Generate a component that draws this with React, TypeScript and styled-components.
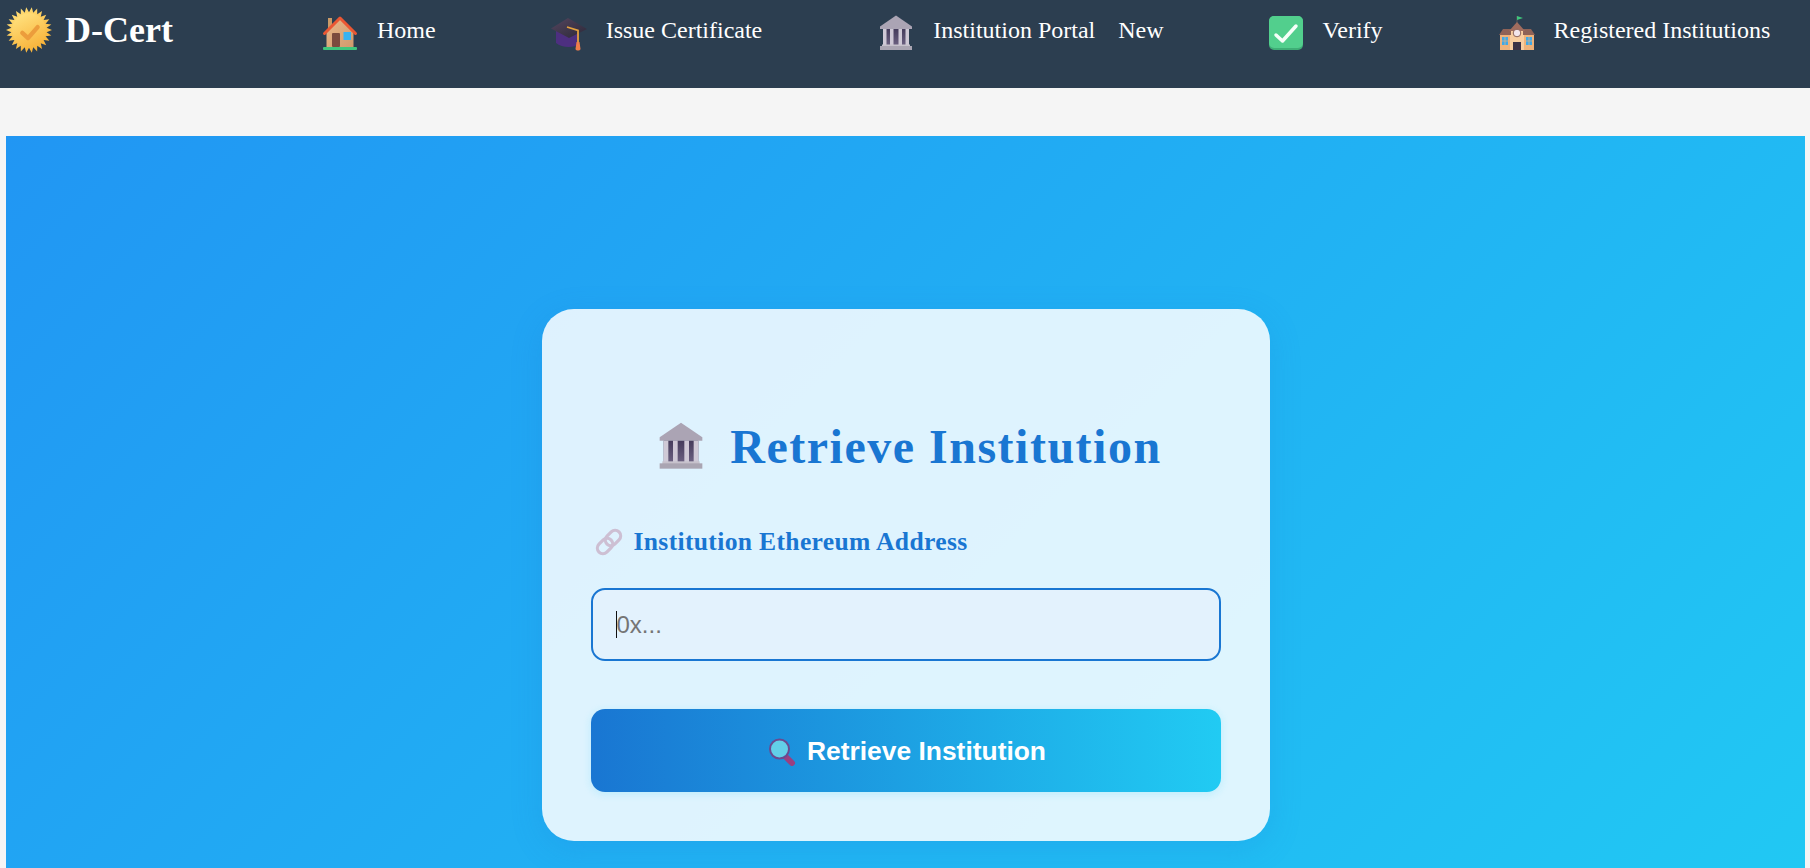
import React from "react";
import styled, { createGlobalStyle } from "styled-components";

const Global = createGlobalStyle`
  html, body { margin: 0; padding: 0; background: #f5f5f5; overflow: hidden; height: 100%; }
  body { font-family: "Liberation Serif", "Times New Roman", serif; }
  * { box-sizing: border-box; }
`;

const Page = styled.div`
  width: 1810px;
  height: 868px;
  overflow: hidden;
`;

const Header = styled.header`
  height: 88px;
  background: #2c3e50;
  display: flex;
  align-items: flex-start;
  color: #fff;
`;

const Brand = styled.div`
  display: flex;
  align-items: center;
  gap: 13px;
  width: 322px;
  padding: 7px 0 0 6px;
  font-size: 36px;
  font-weight: 700;
  line-height: 46px;
`;

const Nav = styled.nav`
  display: flex;
  align-items: flex-start;
  padding-top: 13px;
`;

const NavItem = styled.a<{ $gap?: number }>`
  display: flex;
  align-items: flex-start;
  gap: 19px;
  margin-right: ${(p) => p.$gap ?? 115}px;
  font-size: 24px;
  line-height: 34px;
  color: #fff;
  white-space: nowrap;
`;

const NavGlyph = styled.span`
  display: block;
  width: 36px;
  height: 36px;
  margin-top: 2px;
  flex: none;
  & > svg { display: block; }
`;

const NewTag = styled.span`
  margin-left: 5px;
`;

const Main = styled.main`
  margin: 48px 5px 0 6px;
  height: 878px;
  background: linear-gradient(135deg, #2196f3 0%, #21cbf3 100%);
  display: flex;
  justify-content: center;
  padding-top: 173px;
`;

const Card = styled.section`
  width: 728px;
  height: 532px;
  padding: 105px 49px 48px;
  background: rgba(255, 255, 255, 0.85);
  border-radius: 32px;
  box-shadow: 0 8px 32px rgba(25, 118, 210, 0.18);
`;

const Title = styled.h1`
  display: flex;
  align-items: center;
  justify-content: center;
  gap: 25px;
  margin: 0 0 47px;
  padding-left: 8px;
  height: 64px;
  font-size: 48px;
  font-weight: 700;
  letter-spacing: 1.5px;
  color: #1976d2;
`;

const FieldLabel = styled.label`
  display: flex;
  align-items: center;
  gap: 11px;
  margin-bottom: 29px;
  padding-left: 4px;
  height: 34px;
  font-size: 25.6px;
  font-weight: 700;
  letter-spacing: 0.33px;
  color: #1976d2;
`;

const InputWrap = styled.div`
  position: relative;
  margin-bottom: 48px;
`;

const AddressInput = styled.input`
  display: block;
  width: 100%;
  height: 73px;
  padding: 0 24px;
  border: 2px solid #1976d2;
  border-radius: 14px;
  background: #e3f2fd;
  font-family: "Liberation Sans", Arial, sans-serif;
  font-size: 24px;
  color: #222;
  outline: none;
  &::placeholder { color: #757575; }
`;

const Caret = styled.span`
  position: absolute;
  left: 25px;
  top: 23px;
  width: 1px;
  height: 27px;
  background: #111;
`;

const Submit = styled.button`
  display: flex;
  align-items: center;
  justify-content: center;
  gap: 11px;
  width: 100%;
  height: 83px;
  padding: 2px 0 0 3px;
  border: none;
  border-radius: 14px;
  background: linear-gradient(90deg, #1976d2 0%, #21cbf3 100%);
  box-shadow: 0 2px 8px rgba(33, 203, 243, 0.18);
  color: #fff;
  font-family: "Liberation Sans", Arial, sans-serif;
  font-size: 26.4px;
  font-weight: 700;
`;

const Seal = ({ size }: { size: number }) => {
  const points: string[] = [];
  for (let i = 0; i < 52; i++) {
    const r = i % 2 === 0 ? 24 : 18.5;
    const a = (i / 52) * Math.PI * 2;
    points.push(`${24 + r * Math.cos(a)},${24 + r * Math.sin(a)}`);
  }
  return (
    <svg width={size} height={size} viewBox="0 0 48 48">
      <defs>
        <linearGradient id="sealA" x1="0.2" y1="0" x2="0.8" y2="1">
          <stop offset="0" stopColor="#ffe07a" />
          <stop offset="1" stopColor="#f7ae32" />
        </linearGradient>
        <linearGradient id="sealB" x1="0.2" y1="0" x2="0.7" y2="1">
          <stop offset="0" stopColor="#ffe27f" />
          <stop offset="1" stopColor="#f9b53e" />
        </linearGradient>
      </defs>
      <polygon points={points.join(" ")} fill="url(#sealA)" />
      <circle cx="24" cy="24" r="17.5" fill="url(#sealB)" />
      <path d="M17 27l6 5.500L33 21" fill="none" stroke="#ec9d3c" strokeWidth="4.500" strokeLinecap="round" strokeLinejoin="round" />
    </svg>
  );
};

const House = ({ size }: { size: number }) => (
  <svg width={size} height={size} viewBox="0 0 36 36">
    <defs>
      <linearGradient id="houseWall" x1="0" y1="0" x2="1" y2="1">
        <stop offset="0" stopColor="#e9b78a" />
        <stop offset="1" stopColor="#cf9a6c" />
      </linearGradient>
    </defs>
    <rect x="6" y="3" width="4" height="12" fill="#c99a68" />
    <path d="M4.500 17 18 4l13.500 13v16h-27z" fill="url(#houseWall)" />
    <path d="M2.500 18.500 18 3l15.500 15.500" fill="none" stroke="#ea5733" strokeWidth="3" strokeLinecap="round" strokeLinejoin="round" />
    <rect x="10" y="18" width="8" height="14" rx="1" fill="#7b4b3e" />
    <rect x="21.500" y="17" width="7.500" height="8" fill="#35b3f2" />
    <rect x="1" y="32" width="34" height="3" rx="1" fill="#3fc67c" />
  </svg>
);

const GradCap = ({ size }: { size: number }) => (
  <svg width={size} height={size} viewBox="0 0 36 36">
    <defs>
      <linearGradient id="capTop" x1="0" y1="0" x2="1" y2="1">
        <stop offset="0" stopColor="#54465f" />
        <stop offset="1" stopColor="#2c2838" />
      </linearGradient>
    </defs>
    <path d="M5 16v12c6 5 18 5 23 1V16z" fill="#4d2f80" />
    <path d="M0 13.500 17 3l19 11-18 9z" fill="url(#capTop)" />
    <path d="M16 12l11 3.500V28" fill="none" stroke="#e3a13f" strokeWidth="1.800" />
    <path d="M25.500 27h3l1 7c-.5 2-4.500 2-5 0z" fill="#f07d4a" />
  </svg>
);

const Bank = ({ size }: { size: number }) => (
  <svg width={size} height={size} viewBox="0 0 36 36">
    <defs>
      <linearGradient id="bankDark" x1="0" y1="0" x2="0" y2="1">
        <stop offset="0" stopColor="#453c5c" />
        <stop offset="1" stopColor="#6b6080" />
      </linearGradient>
    </defs>
    <path d="M18 .500 34 11.500v2.500H2v-2.500z" fill="#aba4b4" />
    <rect x="5" y="14" width="26" height="16" fill="url(#bankDark)" />
    <rect x="5" y="14" width="3.500" height="16" fill="#cfc9d6" />
    <rect x="12" y="14" width="3.500" height="16" fill="#cfc9d6" />
    <rect x="20.500" y="14" width="3.500" height="16" fill="#cfc9d6" />
    <rect x="27.500" y="14" width="3.500" height="16" fill="#cfc9d6" />
    <rect x="4" y="29.500" width="28" height="2" fill="#c7c2cc" />
    <rect x="2" y="31" width="32" height="4" fill="#aaa5b2" />
  </svg>
);

const CheckBox = ({ size }: { size: number }) => (
  <svg width={size} height={size} viewBox="0 0 36 36">
    <rect x="1" y="1" width="34" height="34" rx="5" fill="#3fae76" />
    <rect x="1" y="1" width="34" height="32" rx="5" fill="#52cf8d" />
    <path d="M8 20l6.500 6L28 11" fill="none" stroke="#f6fff9" strokeWidth="3.500" strokeLinecap="round" strokeLinejoin="round" />
  </svg>
);

const School = ({ size }: { size: number }) => (
  <svg width={size} height={size} viewBox="0 0 36 36">
    <path d="M18 1v8" stroke="#5b5b5b" strokeWidth="1" />
    <path d="M18 1l6 2-6 2z" fill="#3fc67c" />
    <rect x="1" y="19" width="34" height="16" fill="#eeb27a" />
    <rect x="11" y="14" width="14" height="21" fill="#f8cda0" />
    <path d="M0 20 4 14h8v6zM36 20l-4-6h-8v6z" fill="#8e6257" />
    <path d="M18 7l-8 9h16z" fill="#a06c5e" />
    <circle cx="18" cy="18" r="3.800" fill="#f3e6ec" stroke="#8e6257" />
    <rect x="14" y="27" width="8" height="8" fill="#3b3246" />
    <rect x="3" y="22" width="6" height="8" fill="#3fa9e8" />
    <rect x="27" y="22" width="6" height="8" fill="#3fa9e8" />
    <path d="M6 22v8M3 26h6M30 22v8M27 26h6" stroke="#eeb27a" strokeWidth="0.700" />
  </svg>
);

const Chain = ({ size }: { size: number }) => (
  <svg width={size} height={size} viewBox="0 0 28 28">
    <g fill="none" stroke="#cdbfd3" strokeWidth="3.200">
      <rect x="12.500" y="1.500" width="11" height="17" rx="5.500" transform="rotate(45 18 10)" />
      <rect x="4.500" y="9.500" width="11" height="17" rx="5.500" transform="rotate(45 10 18)" />
    </g>
  </svg>
);

const Magnifier = ({ size }: { size: number }) => (
  <svg width={size} height={size} viewBox="0 0 28 28">
    <path d="M18 19l6 6" stroke="#9b3f80" strokeWidth="6" strokeLinecap="round" />
    <circle cx="11.500" cy="11" r="9.500" fill="#62cfe8" stroke="#6a4a90" strokeWidth="2" />
  </svg>
);

export default function App() {
  return (
    <Page>
      <Global />
      <Header>
        <Brand>
          <Seal size={46} />
          D-Cert
        </Brand>
        <Nav>
          <NavItem>
            <NavGlyph>
              <House size={36} />
            </NavGlyph>
            Home
          </NavItem>
          <NavItem $gap={116}>
            <NavGlyph>
              <GradCap size={36} />
            </NavGlyph>
            Issue Certificate
          </NavItem>
          <NavItem $gap={104}>
            <NavGlyph>
              <Bank size={36} />
            </NavGlyph>
            <span>
              Institution Portal <NewTag>&nbsp;&nbsp;New</NewTag>
            </span>
          </NavItem>
          <NavItem $gap={116}>
            <NavGlyph>
              <CheckBox size={36} />
            </NavGlyph>
            Verify
          </NavItem>
          <NavItem $gap={0}>
            <NavGlyph>
              <School size={36} />
            </NavGlyph>
            Registered Institutions
          </NavItem>
        </Nav>
      </Header>
      <Main>
        <Card>
          <Title>
            <Bank size={48} />
            Retrieve Institution
          </Title>
          <FieldLabel>
            <Chain size={28} />
            Institution Ethereum Address
          </FieldLabel>
          <InputWrap>
            <AddressInput placeholder="0x..." />
            <Caret />
          </InputWrap>
          <Submit>
            <Magnifier size={28} />
            Retrieve Institution
          </Submit>
        </Card>
      </Main>
    </Page>
  );
}
